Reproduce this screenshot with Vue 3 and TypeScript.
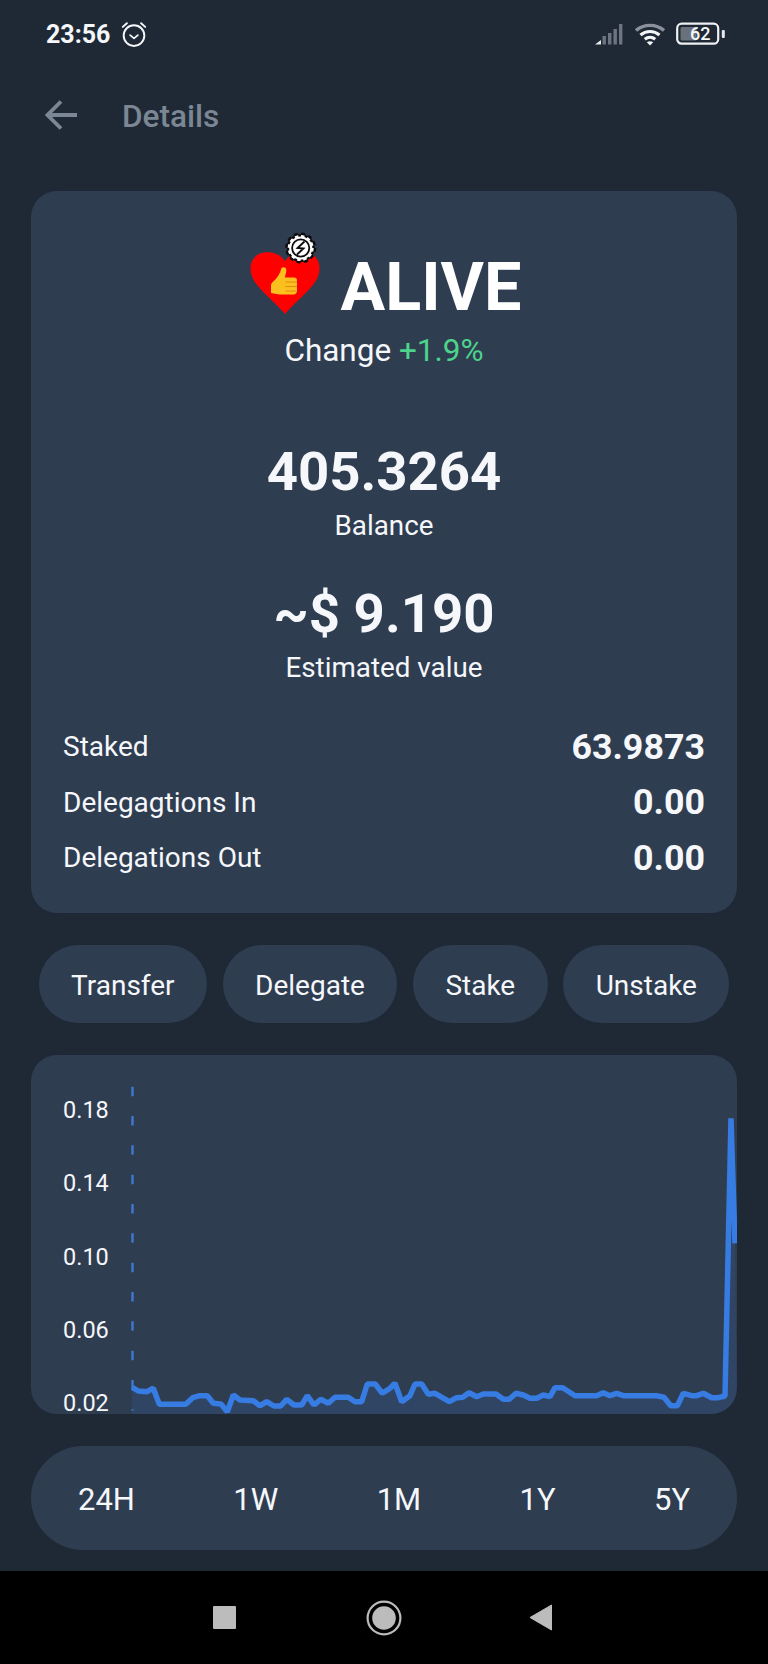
<script setup lang="ts">
const rows = [
  { label: 'Staked', value: '63.9873' },
  { label: 'Delegagtions In', value: '0.00' },
  { label: 'Delegations Out', value: '0.00' },
]
const actions = ['Transfer', 'Delegate', 'Stake', 'Unstake']
const ticks = ['0.18', '0.14', '0.10', '0.06', '0.02']
const ranges = ['24H', '1W', '1M', '1Y', '5Y']

// traced from the reference: [x, y] in 3x crop units, one list per crop
const leftTrace = [
  [337, 1042], [355, 1053], [380, 1055], [400, 1045], [418, 1093], [497, 1093], [518, 1073], [540, 1067],
  [562, 1067], [580, 1090], [603, 1092], [622, 1115], [640, 1065], [660, 1080], [700, 1082], [720, 1097],
  [740, 1085], [762, 1098], [782, 1098], [800, 1078], [822, 1095], [845, 1095], [862, 1067], [882, 1095],
  [902, 1078], [925, 1090], [945, 1072], [985, 1072], [1005, 1085], [1025, 1085], [1042, 1032], [1066, 1032],
  [1087, 1060], [1110, 1045],
]
const rightTrace = [
  [15, 1030], [35, 1085], [60, 1067], [75, 1032], [95, 1032], [115, 1063], [135, 1060], [178, 1085],
  [200, 1073], [218, 1072], [237, 1058], [260, 1070], [280, 1062], [318, 1062], [340, 1078], [358, 1078],
  [378, 1060], [400, 1065], [420, 1075], [440, 1075], [460, 1065], [480, 1070], [495, 1043], [518, 1043],
  [555, 1067], [620, 1067], [640, 1058], [660, 1067], [680, 1060], [700, 1067], [800, 1067], [822, 1072],
  [842, 1097], [862, 1097], [880, 1060], [905, 1067], [920, 1067], [940, 1060], [965, 1073], [985, 1073],
  [1005, 1068], [1023, 235], [1035, 610],
]

const toCard = (originX: number) => ([x, y]: number[]) =>
  [+(originX + x / 3 - 31).toFixed(1), +(1040 + y / 3 - 1055).toFixed(1)]

const points = [...leftTrace.map(toCard(20)), ...rightTrace.map(toCard(390))]
const linePoints = points.map((p) => p.join(',')).join(' ')
const areaPoints = `101,359 ${linePoints} 706,359`
</script>

<template>
  <div class="page">
    <div class="status">
      <span class="clock">23:56</span>
      <svg class="alarm" width="28" height="28" viewBox="0 0 26 26" fill="none" stroke="#f5f7fa" stroke-linecap="round" stroke-linejoin="round">
        <circle cx="13" cy="14.500" r="9.600" stroke-width="1.800" />
        <path d="M9.400 14 13 17l3.600-3" stroke-width="1.600" />
        <path d="M2.600 6.400 6.400 3M23.400 6.400 19.600 3" stroke-width="1.800" />
      </svg>
      <span class="status-gap" />
      <svg width="30" height="22" viewBox="0 0 30 22">
        <path d="M1 21.500 7 17v4.500z" fill="#e6e8eb" />
        <g fill="#6c7480">
          <rect x="8.500" y="13" width="3.400" height="8.500" />
          <rect x="14" y="10" width="3.400" height="11.500" />
          <rect x="19.500" y="6" width="3.400" height="15.500" />
          <rect x="25" y="1" width="3.400" height="20.500" />
        </g>
      </svg>
      <svg class="wifi" width="32" height="24" viewBox="0 0 32 24" fill="none" stroke-linecap="butt">
        <path d="M2 8.500C9.700 1.700 22.300 1.700 30 8.500" stroke="#8a919b" stroke-width="3.400" />
        <path d="M6.500 13C12 8.300 20 8.300 25.500 13" stroke="#f2f4f6" stroke-width="3.200" />
        <path d="M10.800 17.300C13.800 14.800 18.200 14.800 21.200 17.300" stroke="#f2f4f6" stroke-width="3.200" />
        <path d="M16 23.500 12.800 20.300C14.800 19 17.200 19 19.200 20.300z" fill="#f2f4f6" />
      </svg>
      <svg class="battery" width="50" height="24" viewBox="0 0 50 24">
        <rect x="1.200" y="1.700" width="41" height="20" rx="4.500" fill="none" stroke="#eef0f2" stroke-width="2.200" />
        <rect x="4.500" y="5" width="16" height="13.400" rx="1.500" fill="#69717d" />
        <rect x="45.800" y="8" width="3" height="8" rx="1" fill="#e6e8eb" />
        <text x="14" y="18" class="battery-text">62</text>
      </svg>
    </div>

    <header class="appbar">
      <svg width="32" height="30" viewBox="0 0 32 30" fill="none" stroke="#7b8794" stroke-width="3.800">
        <path d="M2 15H32M16 1.500 2.500 15l13.500 13.500" />
      </svg>
      <span class="appbar-title">Details</span>
    </header>

    <section class="card summary">
      <div class="token">
        <svg class="logo" width="76" height="86" viewBox="0 0 76 86">
          <path d="M38 84C28 72 12 60 6 49 1 38 3 25 17 22.500 26 21 34 25 38 31 42 25 50 21 59 22.500 73 25 75 38 70 49 64 60 48 72 38 84Z" fill="#fe0000" />
          <path d="M34.500 38c1.500-1.200 4.500-.8 4.800 1.500.3 2.500-1 5-1.300 8H47c2 0 3 1.300 3 3v10c0 2.500-1.500 4-3.500 4H33c-3 0-5-1-9-1.500V55c0-1 1-2.500 2.500-3.800C30 48.500 33 44 34.500 38z" fill="#fbbf1e" />
          <path d="M38.500 52h11.500M38.500 56.500h11.500M38.500 61h11" stroke="#e08a14" stroke-width="1" fill="none" />
          <circle cx="53.700" cy="18" r="14" fill="#0c0c0c" />
          <circle cx="53.700" cy="18" r="14.300" fill="none" stroke="#0c0c0c" stroke-width="2.400" stroke-dasharray="4 3.490" />
          <circle cx="53.700" cy="18" r="11.600" fill="#fff" />
          <circle cx="53.700" cy="18" r="12" fill="none" stroke="#fff" stroke-width="2" stroke-dasharray="3.500 2.780" />
          <circle cx="53.700" cy="18" r="8.600" fill="none" stroke="#0c0c0c" stroke-width="1.800" />
          <path d="M57.500 11.500 50.500 18l6 .5-6.500 6" fill="none" stroke="#0c0c0c" stroke-width="1.800" />
        </svg>
        <h1 class="symbol">ALIVE</h1>
      </div>
      <p class="change">Change <span class="up">+1.9%</span></p>

      <div class="figure first">
        <strong class="amount">405.3264</strong>
        <span class="caption">Balance</span>
      </div>
      <div class="figure">
        <strong class="amount">~$ 9.190</strong>
        <span class="caption">Estimated value</span>
      </div>

      <dl class="rows">
        <div v-for="row in rows" :key="row.label" class="row">
          <dt>{{ row.label }}</dt>
          <dd>{{ row.value }}</dd>
        </div>
      </dl>
    </section>

    <div class="actions">
      <button v-for="action in actions" :key="action" class="pill" type="button">{{ action }}</button>
    </div>

    <section class="card chart">
      <div class="ticks">
        <span v-for="tick in ticks" :key="tick">{{ tick }}</span>
      </div>
      <svg class="plot" width="706" height="359" viewBox="0 0 706 359" fill="none">
        <line x1="101.500" y1="31.700" x2="101.500" y2="355.500" stroke="#3f78cf" stroke-width="2.400" stroke-dasharray="9.500 19.830" />
        <polygon :points="areaPoints" fill="#3a7de0" fill-opacity="0.13" />
        <polyline :points="linePoints" stroke="#367ce3" stroke-width="5.500" stroke-linejoin="bevel" />
      </svg>
    </section>

    <nav class="ranges">
      <span v-for="range in ranges" :key="range">{{ range }}</span>
    </nav>

    <footer class="navbar">
      <span class="nav-square" />
      <svg width="36" height="36" viewBox="0 0 36 36">
        <circle cx="18" cy="18" r="16.400" fill="none" stroke="#bcbcbc" stroke-width="2.200" />
        <circle cx="18" cy="18" r="11.800" fill="#bcbcbc" />
      </svg>
      <svg class="nav-back" width="24" height="27" viewBox="0 0 24 27">
        <path d="M22.500 1 1 13.500l21.500 12.500z" fill="#bcbcbc" stroke="#bcbcbc" stroke-width="1" stroke-linejoin="round" />
      </svg>
    </footer>
  </div>
</template>

<style scoped>
.page {
  display: flex;
  flex-direction: column;
  width: 768px;
  height: 1664px;
  overflow: hidden;
  background: #1f2935;
  color: #f5f7fa;
  font-family: Roboto, "Liberation Sans", sans-serif;
}

.status {
  display: flex;
  align-items: center;
  height: 68px;
  padding: 0 42px 0 46px;
}

.clock {
  font-size: 25px;
  font-weight: 700;
}

.alarm {
  margin-left: 10px;
}

.status-gap {
  flex: 1;
}

.wifi {
  margin-left: 10px;
}

.battery {
  margin-left: 10px;
}

.battery-text {
  fill: #f5f7fa;
  font-size: 18px;
  font-weight: 500;
}

.appbar {
  display: flex;
  align-items: center;
  gap: 45px;
  height: 94px;
  margin-bottom: 29px;
  padding-left: 45px;
}

.appbar-title {
  padding-top: 2px;
  color: #7b8794;
  font-size: 31.500px;
  font-weight: 500;
}

.card {
  margin: 0 31px;
  border-radius: 26px;
  background: #2f3d51;
}

.summary {
  padding: 54px 32px 29px;
  text-align: center;
}

.token {
  display: flex;
  align-items: center;
  justify-content: center;
  gap: 18px;
  height: 80px;
}

.logo {
  margin-top: -24px;
}

.symbol {
  margin: 4px 0 0;
  font-size: 66.500px;
  font-weight: 700;
  line-height: 80px;
  color: #fff;
}

.change {
  margin: 6px 0 -1px;
  font-size: 31.500px;
  line-height: 40px;
}

.up {
  color: #4dd38c;
}

.figure {
  display: flex;
  flex-direction: column;
  align-items: center;
  gap: 5px;
  margin-top: 37px;
}

.figure.first {
  margin-top: 69px;
}

.amount {
  font-size: 54.500px;
  font-weight: 700;
  line-height: 64px;
}

.caption {
  font-size: 27.800px;
  line-height: 36px;
}

.rows {
  margin: 33px 0 -2px;
}

.row {
  display: flex;
  align-items: center;
  justify-content: space-between;
  height: 55.500px;
}

.row dt {
  font-size: 28px;
}

.row dd {
  margin: 0;
  font-size: 35.800px;
  font-weight: 700;
}

.actions {
  display: flex;
  justify-content: center;
  gap: 15.500px;
  margin: 32px 0;
}

.pill {
  height: 78px;
  padding: 4px 32.500px 0;
  border: 0;
  border-radius: 39px;
  background: #2f3d51;
  color: #f5f7fa;
  font-family: inherit;
  font-size: 28px;
}

.chart {
  position: relative;
  height: 359px;
}

.ticks {
  display: flex;
  flex-direction: column;
  gap: 53.300px;
  padding: 45.700px 0 0 32px;
  font-size: 23.500px;
  line-height: 20px;
}

.plot {
  position: absolute;
  inset: 0;
  overflow: hidden;
  border-radius: 26px;
}

.ranges {
  display: flex;
  box-sizing: border-box;
  align-items: center;
  justify-content: space-between;
  height: 104px;
  margin: 32px 31px 0;
  padding: 4px 47px 0;
  border-radius: 52px;
  background: #2f3d51;
  font-size: 31px;
}

.navbar {
  display: flex;
  align-items: center;
  height: 93px;
  margin-top: auto;
  padding-left: 213px;
  gap: 130px;
  background: #000;
}

.nav-square {
  width: 23px;
  height: 23px;
  border-radius: 1px;
  background: #bcbcbc;
}

.nav-back {
  margin-left: -3px;
}
</style>

<style>
body {
  background: #1f2935;
}
</style>
